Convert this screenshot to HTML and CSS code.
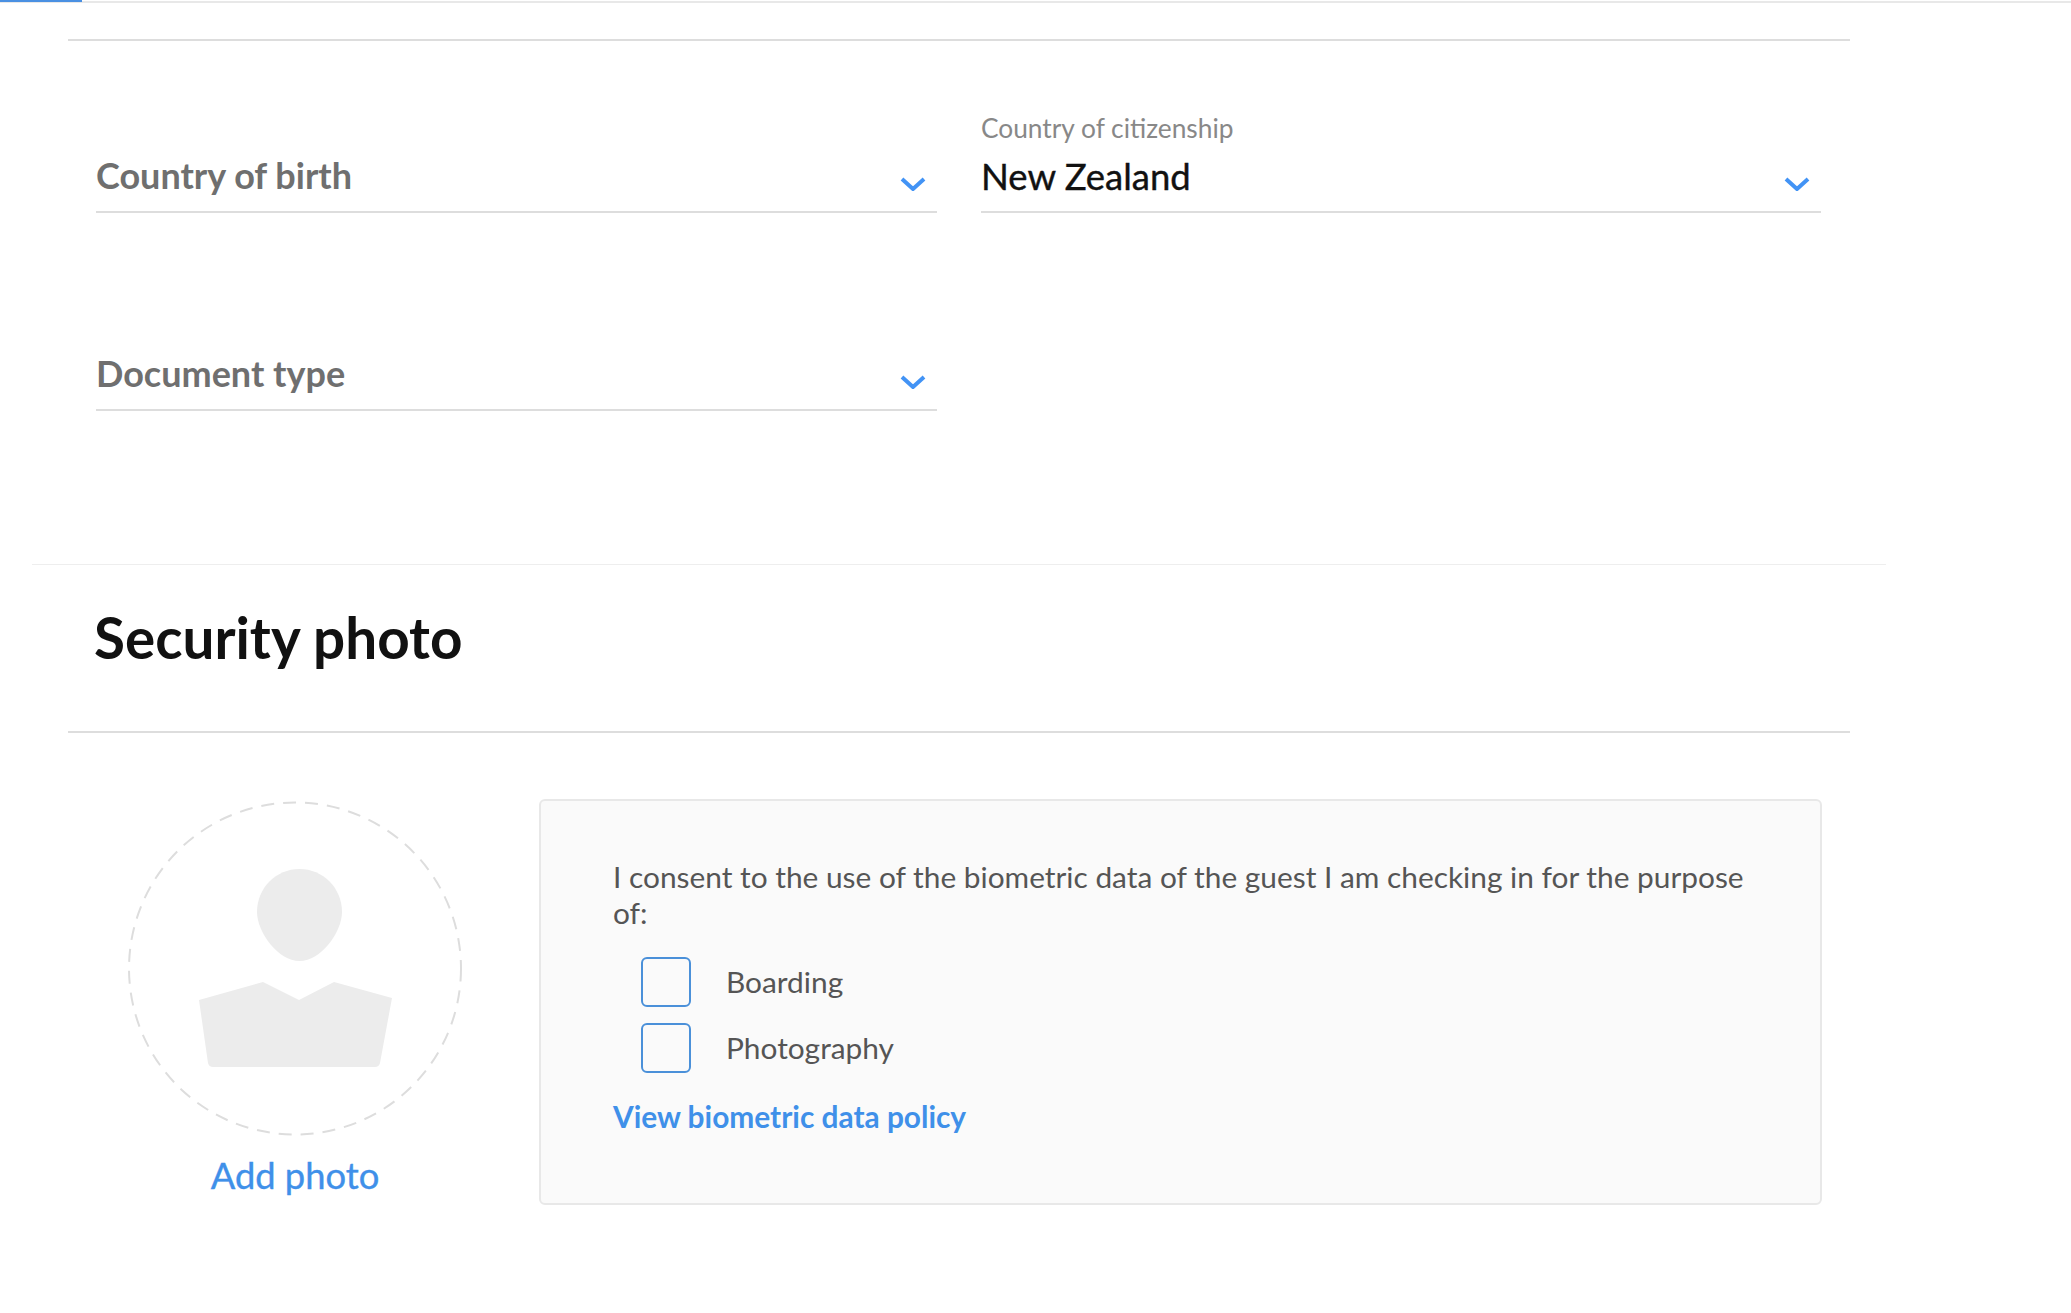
FILE: index.html
```html
<!DOCTYPE html>
<html lang="en">
<head>
    <meta charset="UTF-8">
    <title>Guest check-in</title>
    <link rel="stylesheet" href="styles.css">
</head>
<body>
    <div class="progress"><div class="progress-bar"></div></div>

    <div class="form-part">
        <div class="field-row">
            <div class="field">
                <div class="select">
                    <span class="placeholder">Country of birth</span>
                    <svg class="chevron" viewBox="0 0 26 14"><path d="M2 2l11 10L24 2"/></svg>
                </div>
            </div>
            <div class="field">
                <label class="field-label">Country of citizenship</label>
                <div class="select">
                    <span class="value">New Zealand</span>
                    <svg class="chevron" viewBox="0 0 26 14"><path d="M2 2l11 10L24 2"/></svg>
                </div>
            </div>
        </div>
        <div class="field-row">
            <div class="field">
                <div class="select">
                    <span class="placeholder">Document type</span>
                    <svg class="chevron" viewBox="0 0 26 14"><path d="M2 2l11 10L24 2"/></svg>
                </div>
            </div>
        </div>
    </div>

    <div class="section-title">
        <h2>Security photo</h2>
    </div>

    <div class="photo-part">
        <div class="photo-col">
            <svg class="avatar" viewBox="0 0 334 334">
                <circle class="avatar-ring" cx="167" cy="166.500" r="166"/>
                <path class="avatar-shape" d="M171.500 67C195 67 214 86 214 110C214 130 193 159 171.500 159C150 159 129 130 129 110C129 86 148 67 171.500 67Z"/>
                <path class="avatar-shape" d="M71 198L135 180L171 198L206 180L264 196L252 261Q251 265 247 265H85Q81 265 80 261Z"/>
            </svg>
            <a class="add-photo">Add photo</a>
        </div>
        <div class="consent">
            <p class="consent-text">I consent to the use of the biometric data of the guest I am checking in for the purpose of:</p>
            <div class="check-row"><span class="checkbox"></span><span class="check-label">Boarding</span></div>
            <div class="check-row"><span class="checkbox"></span><span class="check-label">Photography</span></div>
            <a class="policy-link">View biometric data policy</a>
        </div>
    </div>
</body>
</html>
```

FILE: styles.css
```css
body {
    margin: 0;
    background: #fff;
    font-family: Lato, "Liberation Sans", sans-serif;
    height: 1313px;
    overflow: hidden;
}

.progress {
    height: 3px;
    background: linear-gradient(#fff 1px, #e8e8e8 1px);
}
.progress-bar {
    width: 82px;
    height: 2px;
    background: #4a90e2;
}

.form-part {
    margin: 36px 0 0 68px;
    width: 1782px;
    border-top: 2px solid #ddd;
    padding: 71px 0 0 28px;
    box-sizing: border-box;
}
.field-row {
    display: grid;
    grid-template-columns: 841px 840px;
    column-gap: 44px;
    height: 100px;
    margin-bottom: 99px;
}
.field {
    display: flex;
    flex-direction: column;
    justify-content: flex-end;
}
.field-label {
    color: #888;
    font-size: 26.300px;
    line-height: 32px;
    margin-bottom: 13px;
}
.select {
    display: flex;
    justify-content: space-between;
    align-items: center;
    height: 54px;
    border-bottom: 2px solid #ddd;
}
.placeholder {
    color: #6f6f6f;
    font-size: 36px;
    font-weight: 700;
    margin-top: -19px;
}
.value {
    color: #111;
    font-size: 36.500px;
    -webkit-text-stroke: 0.4px #111;
    margin-top: -17px;
}
.chevron {
    width: 26px;
    height: 14px;
    margin: -1px 11px 0 0;
}
.chevron path {
    fill: none;
    stroke: #4293f5;
    stroke-width: 4;
}

.section-title {
    margin: 153px 0 0 32px;
    width: 1854px;
    border-top: 1px solid #eee;
}
.section-title h2 {
    margin: 0 0 0 62px;
    height: 166px;
    line-height: 144px;
    color: #111;
    font-size: 56.600px;
    font-weight: 700;
}

.photo-part {
    display: flex;
    gap: 77px;
    margin-left: 68px;
    width: 1782px;
    border-top: 2px solid #ddd;
    padding: 66px 0 0 60px;
    box-sizing: border-box;
}
.photo-col {
    width: 334px;
    flex: none;
    padding-top: 3px;
    text-align: center;
}
.avatar {
    display: block;
    width: 334px;
    height: 334px;
    overflow: visible;
}
.avatar-ring {
    fill: none;
    stroke: #ddd;
    stroke-width: 2;
    stroke-dasharray: 13 9;
}
.avatar-shape {
    fill: #ececec;
}
.add-photo {
    display: block;
    margin-top: 17px;
    color: #3f90e9;
    font-size: 36.300px;
    -webkit-text-stroke: 0.4px #3f90e9;
    line-height: 44px;
}

.consent {
    width: 1283px;
    height: 406px;
    box-sizing: border-box;
    padding: 58px 70px 0 72px;
    background: #fafafa;
    border: 2px solid #e8e8e8;
    border-radius: 6px;
    color: #555;
    font-size: 29.850px;
}
.consent-text {
    margin: 0 0 26px;
    line-height: 36px;
}
.check-row {
    display: flex;
    align-items: center;
    gap: 35px;
    height: 50px;
    margin: 0 0 16px 28px;
}
.check-label {
    margin-top: -2px;
}
.checkbox {
    width: 50px;
    height: 50px;
    box-sizing: border-box;
    border: 2px solid #4a90d9;
    border-radius: 6px;
}
.policy-link {
    display: block;
    margin-top: 26px;
    color: #3f90e9;
    font-weight: 700;
    line-height: 36px;
}
```
